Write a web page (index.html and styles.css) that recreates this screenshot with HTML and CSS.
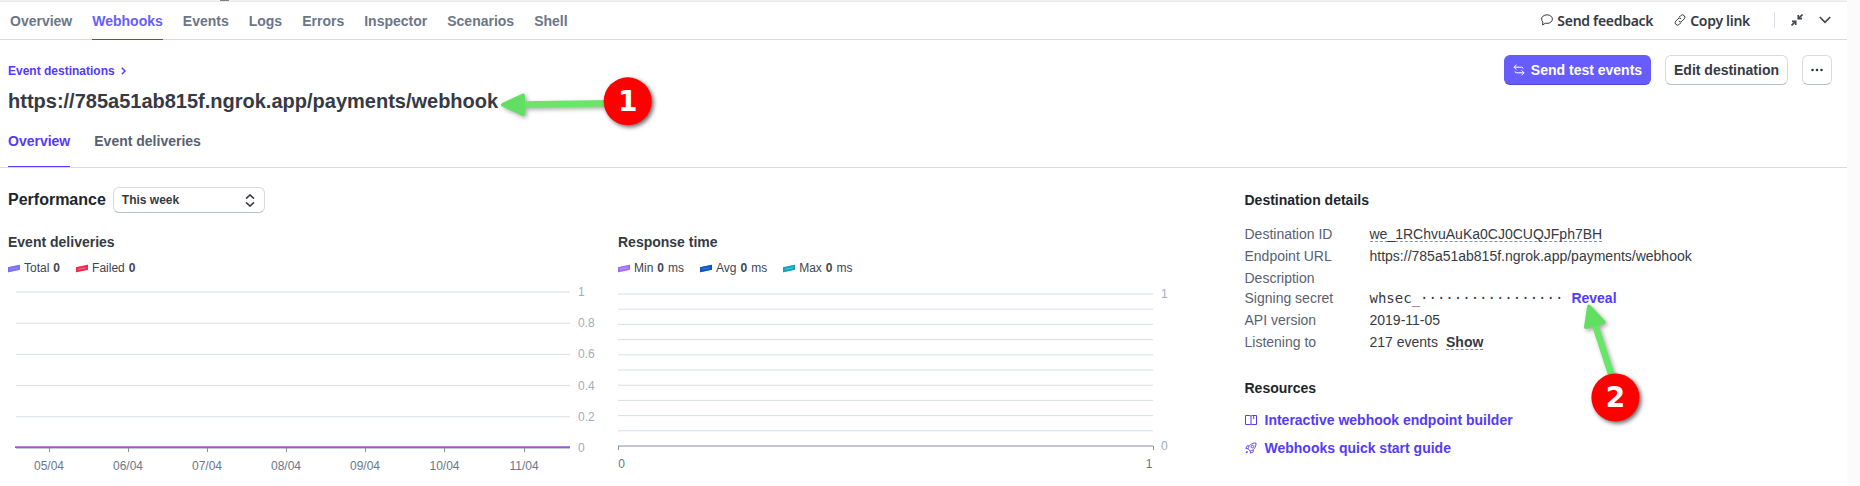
FILE: index.html
```html
<!DOCTYPE html>
<html lang="en">
<head>
<meta charset="utf-8">
<title>Webhooks</title>
<link rel="stylesheet" href="styles.css">
</head>
<body>
<div class="page">
  <div class="strip"><span class="strip-mark"></span></div>
  <header class="topbar">
    <nav class="nav">
      <a class="nav-item">Overview</a>
      <a class="nav-item active">Webhooks</a>
      <a class="nav-item">Events</a>
      <a class="nav-item">Logs</a>
      <a class="nav-item">Errors</a>
      <a class="nav-item">Inspector</a>
      <a class="nav-item">Scenarios</a>
      <a class="nav-item">Shell</a>
    </nav>
    <div class="tools">
      <a class="tool feedback"><svg width="12" height="12" viewBox="0 0 12 12"><path d="M6 .8c3 0 5.400 1.900 5.400 4.300S9 9.400 6 9.400c-.6 0-1.200-.1-1.700-.2L1.600 11l.3-3C1.100 7.200.6 6.200.6 5.100.6 2.700 3 .8 6 .8z"/></svg><span>Send feedback</span></a>
      <a class="tool copy"><svg width="12" height="12" viewBox="0 0 12 12"><path d="M5 3.300 6.700 1.600a2.300 2.300 0 0 1 3.500 3.300L8 7.200a2.200 2.200 0 0 1-3.200 0M7 8.700l-1.700 1.700a2.300 2.300 0 0 1-3.500-3.300L4 4.800a2.200 2.200 0 0 1 3.200 0"/></svg><span>Copy link</span></a>
      <span class="divider"></span>
      <svg class="collapse" width="12" height="12" viewBox="0 0 12 12"><path d="M11.500.5 8 4M.5 11.500 4 8"/><path d="M7.300 1v3.700H11M1 7.300h3.700V11"/></svg>
      <svg class="chev" width="12" height="8" viewBox="0 0 12 8"><path d="M.8 1 6 6.300 11.200 1"/></svg>
    </div>
  </header>

  <section class="heading">
    <div class="titles">
      <a class="crumb">Event destinations <svg width="5" height="8" viewBox="0 0 5 8"><path d="M.8.8 4 4 .8 7.200"/></svg></a>
      <h1>https://785a51ab815f.ngrok.app/payments/webhook</h1>
    </div>
    <div class="actions">
      <button class="btn primary"><svg width="12" height="12" viewBox="0 0 12 12"><path d="M3.500.7 1 3.200l2.500 2.500M1 3.200h7.500a1.500 1.500 0 0 1 1.500 1.500M8.500 6.300 11 8.800l-2.500 2.500M11 8.800H3.500A1.500 1.500 0 0 1 2 7.300"/></svg><span>Send test events</span></button>
      <button class="btn">Edit destination</button>
      <button class="btn more"><svg width="12" height="4" viewBox="0 0 12 4"><circle cx="1.500" cy="2" r="1.300"/><circle cx="6" cy="2" r="1.300"/><circle cx="10.500" cy="2" r="1.300"/></svg></button>
    </div>
  </section>

  <nav class="tabs">
    <a class="tab active">Overview</a>
    <a class="tab">Event deliveries</a>
  </nav>

  <main class="content">
    <section class="performance">
      <div class="perf-head">
        <h2>Performance</h2>
        <div class="select"><span>This week</span><svg width="10" height="13" viewBox="0 0 10 13"><path d="M1 4.600 5 .9l4 3.700M1 8.400l4 3.700 4-3.700"/></svg></div>
      </div>
      <div class="charts">
        <div class="chart">
          <h3>Event deliveries</h3>
          <div class="legend">
            <span class="key"><i class="swatch total"></i>Total <b>0</b></span>
            <span class="key"><i class="swatch failed"></i>Failed <b>0</b></span>
          </div>
          <svg class="plot" width="610" height="206" viewBox="0 280 610 206">
            <g class="grid"><path d="M8 292H562M8 323.200H562M8 354.400H562M8 385.600H562M8 416.800H562"/></g>
            <path class="axis" d="M8 448.500H562"/>
            <path class="ticks" d="M41.500 448v4M120.500 448v4M199.500 448v4M278.500 448v4M357.500 448v4M436.500 448v4M516.500 448v4"/>
            <path class="line-failed" d="M7 446.500H562"/><path class="line-total" d="M7 447.500H562"/>
            <g class="ylab"><text x="570" y="296">1</text><text x="570" y="327">0.8</text><text x="570" y="358">0.6</text><text x="570" y="390">0.4</text><text x="570" y="421">0.2</text><text x="570" y="452">0</text></g>
            <g class="xlab"><text x="41" y="470">05/04</text><text x="120" y="470">06/04</text><text x="199" y="470">07/04</text><text x="278" y="470">08/04</text><text x="357" y="470">09/04</text><text x="436.500" y="470">10/04</text><text x="516" y="470">11/04</text></g>
          </svg>
        </div>
        <div class="chart">
          <h3>Response time</h3>
          <div class="legend">
            <span class="key"><i class="swatch min"></i>Min <b>0</b> ms</span>
            <span class="key"><i class="swatch avg"></i>Avg <b>0</b> ms</span>
            <span class="key"><i class="swatch max"></i>Max <b>0</b> ms</span>
          </div>
          <svg class="plot" width="600" height="206" viewBox="0 280 600 206">
            <g class="grid"><path d="M0 294H535M0 309.200H535M0 324.400H535M0 339.600H535M0 354.800H535M0 370H535M0 385.200H535M0 400.400H535M0 415.600H535M0 430.800H535"/></g>
            <path class="axis strong" d="M0 446H535"/>
            <path class="ticks" d="M.5 446v4M535.500 446v4"/>
            <g class="ylab"><text x="543" y="298">1</text><text x="543" y="450">0</text></g>
            <g class="xlab"><text x="3.500" y="468">0</text><text x="531" y="468">1</text></g>
          </svg>
        </div>
      </div>
    </section>

    <aside class="details">
      <h4>Destination details</h4>
      <dl>
        <dt>Destination ID</dt><dd><span class="dashed">we_1RChvuAuKa0CJ0CUQJFph7BH</span></dd>
        <dt>Endpoint URL</dt><dd>https://785a51ab815f.ngrok.app/payments/webhook</dd>
        <dt>Description</dt><dd></dd>
        <dt>Signing secret</dt><dd class="secret"><span class="mono">whsec_·················</span><a class="reveal">Reveal</a></dd>
        <dt>API version</dt><dd>2019-11-05</dd>
        <dt>Listening to</dt><dd>217 events<b class="dashed show">Show</b></dd>
      </dl>
      <h4 class="res">Resources</h4>
      <a class="link"><svg width="12" height="12" viewBox="0 0 12 12"><path d="M.5 1.500h4.300c.7 0 1.200.4 1.200 1v8.400c0-.3-.5-.4-1.200-.4H.5zM6 2.500c0-.6.500-1 1.200-1h4.300v9H7.200c-.7 0-1.200.1-1.200.4M8.700 1.500V5"/></svg>Interactive webhook endpoint builder</a>
      <a class="link"><svg class="rocket" width="12" height="12" viewBox="0 0 12 12"><path d="M3 6.800C3.600 3.500 6.600.9 11 1c.1 4.400-2.500 7.400-5.800 8zM4.200 3.900 2.200 3.700.8 6.500l2.200.3M8.100 7.800l.2 2-2.800 1.400-.3-2.200M2.300 9 1 11l2-1.300"/><circle cx="7.400" cy="4.600" r="1.300"/></svg>Webhooks quick start guide</a>
    </aside>
  </main>

  <svg class="annotations" width="1860" height="486" viewBox="0 0 1860 486">
    <g class="arrow"><path class="shaft" d="M610 103.300 522 104.600"/><path class="head" d="M503 104.700 523 95.500V114z"/></g>
    <g class="arrow"><path class="shaft" d="M1613 380 1594.500 323"/><path class="head" d="M1589 306.500 1586 327 1603.500 322z"/></g>
    <g class="badge"><circle cx="627.700" cy="101.300" r="24"/><text x="627.700" y="111">1</text></g>
    <g class="badge"><circle cx="1615.400" cy="397.500" r="24"/><text x="1615.400" y="407">2</text></g>
  </svg>
</div>
</body>
</html>
```
FILE: styles.css
```css
* { box-sizing: border-box; }
body {
  margin: 0;
  background: #fbfbfb;
  color: #353a44;
  font: 14px/20px "Liberation Sans", Arial, sans-serif;
}
h1, h2, h3, h4, dl, dd { margin: 0; }
svg { display: block; fill: none; stroke: currentColor; flex: none; }
.page { position: relative; width: 1847px; height: 486px; background: #fff; overflow: hidden; }

.strip { height: 2px; background: #f2f2f2; border-bottom: 1px solid #e8e8e8; padding-left: 220px; }
.strip-mark { display: block; width: 9px; height: 1px; background: #808080; }

.topbar { display: flex; justify-content: space-between; height: 38px; border-bottom: 1px solid #d8dadf; padding: 0 16px 0 10px; }
.nav { display: flex; gap: 20px; }
.nav-item { height: 38px; padding-top: 9px; font-weight: 700; color: #6c7688; }
.nav-item.active { color: #675dff; border-bottom: 1px solid #533afd; }
.tools { display: flex; align-items: center; height: 32px; margin-top: 2px; color: #414552; }
.tool { display: flex; align-items: center; gap: 4px; font: 600 14px/20px "Noto Sans", sans-serif; color: #353a44; }
.tool span { padding-top: 2px; letter-spacing: -0.300px; }
.copy { margin-left: 21px; }
.divider { width: 1px; height: 16px; background: #d8dee4; margin: 0 16px 0 24px; }
.collapse { stroke-width: 1.700; }
.chev { margin-left: 16px; stroke-width: 1.700; }

.heading { display: flex; justify-content: space-between; height: 88px; padding: 15px 15px 0 8px; }
.crumb { display: flex; align-items: center; gap: 6px; margin-top: 8px; font-size: 12px; line-height: 16px; font-weight: 700; color: #533afd; }
.crumb svg { stroke-width: 1.500; }
h1 { margin-top: 8px; font-size: 20px; line-height: 28px; }
.actions { display: flex; gap: 14px; }
.btn { display: flex; align-items: center; justify-content: center; gap: 6px; height: 30px; width: 123px; padding: 0; border: 1px solid #d5dbe1; border-bottom-color: #b8bec9; border-radius: 6px; background: #fff; color: #353a44; font: 700 14px/20px "Liberation Sans", Arial, sans-serif; }
.btn.primary { width: 147px; background: #675dff; border-color: #675dff; border-bottom-color: #5148d8; color: #fff; }
.btn.more { width: 30px; }
.more svg { fill: currentColor; stroke: none; }

.tabs { display: flex; gap: 24px; height: 40px; padding-left: 8px; border-bottom: 1px solid #d8dadf; }
.tab { height: 39px; padding-top: 3px; font-weight: 700; color: #596171; }
.tab.active { color: #533afd; border-bottom: 1px solid #533afd; }

.content { display: flex; }
.performance { flex: none; width: 1244.500px; padding: 19px 0 0 8px; }
.perf-head { display: flex; align-items: center; gap: 7px; height: 26px; }
h2 { font-size: 16px; line-height: 24px; color: #21252c; }
.select { display: flex; align-items: center; justify-content: space-between; width: 152px; height: 26px; padding: 0 9px 0 8px; border: 1px solid #d5dbe1; border-bottom-color: #b8bec9; border-radius: 6px; font-size: 12px; font-weight: 700; }
.select svg { stroke-width: 1.500; }
.charts { display: flex; margin-top: 19px; }
.chart { width: 610px; }
h3 { font-size: 14px; line-height: 20px; }
.legend { display: flex; gap: 16px; margin-top: 8px; font-size: 12px; line-height: 16px; height: 20px; color: #414552; }
.key { display: flex; gap: 4px; }
.swatch { width: 12px; height: 5px; margin-top: 6px; transform: skewY(-12deg); border: 2px solid; }
.total { background: #958cff; border-color: #7a6fff; }
.failed { background: #f8718b; border-color: #ee2a4e; }
.min { background: #c49bff; border-color: #a36bfa; }
.avg { background: #3f82dc; border-color: #0b55c4; }
.max { background: #5cc8d8; border-color: #12a4bb; }
.grid { stroke: #d8dee4; }
.axis { stroke: #c0c8d2; }
.axis.strong { stroke-width: 2; }
.ticks { stroke: #87909f; }
.line-failed { stroke: #b57fd9; }
.line-total { stroke: #7668f5; }
.plot text { font-size: 12px; stroke: none; }
.ylab { fill: #a3acba; }
.xlab { fill: #6c7688; text-anchor: middle; }

.details { padding-top: 22px; }
h4 { font-size: 14px; line-height: 20px; color: #21252c; }
dl { display: grid; grid-template-columns: 125px auto; grid-template-rows: 22px 22px 20px 22px 22px 22px; margin-top: 14px; }
dt { color: #596171; }
dd { display: flex; align-items: flex-start; white-space: nowrap; }
.dashed { height: 18px; border-bottom: 1px dashed #87909f; }
.show { margin-left: 8px; }
.mono { font: 14px/20px "DejaVu Sans Mono", monospace; }
.reveal { margin-left: 8px; font-weight: 700; color: #533afd; }
.res { margin-top: 24px; }
.link { display: flex; align-items: center; gap: 8px; height: 20px; margin-top: 12px; font-weight: 700; color: #533afd; }
.link + .link { margin-top: 8px; }
.rocket { stroke-width: .9; }

.annotations { position: absolute; left: 0; top: 0; stroke: none; pointer-events: none; }
.arrow { filter: drop-shadow(2px 2px 2px #0005); }
.shaft { stroke: #68e668; stroke-width: 6.500; }
.head { fill: #62df62; stroke: #62df62; stroke-width: 4; stroke-linejoin: round; }
.badge circle { fill: #f00; filter: drop-shadow(2px 2px 2px #0009); }
.badge text { fill: #fff; font: 700 28px "DejaVu Sans", sans-serif; text-anchor: middle; }
```
